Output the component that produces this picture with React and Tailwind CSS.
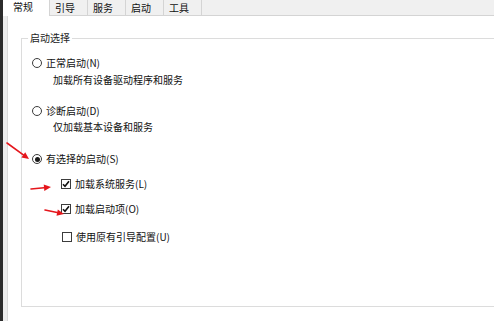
import React from "react";

const font = { fontFamily: '"Microsoft YaHei", "Noto Sans CJK SC", "Noto Sans", sans-serif' };

const tabs = [
  { label: "常规", active: true },
  { label: "引导" },
  { label: "服务" },
  { label: "启动" },
  { label: "工具" },
];

function Radio({ checked }) {
  return (
    <span className="w-[10px] h-[10px] rounded-full border border-[#3c3c3c] bg-white flex items-center justify-center shrink-0">
      {checked && <span className="w-[5px] h-[5px] rounded-full bg-[#1a1a1a]" />}
    </span>
  );
}

function Check({ checked }) {
  return (
    <span className="w-[10px] h-[10px] border border-[#3c3c3c] bg-white flex items-center justify-center shrink-0">
      {checked && (
        <svg width="8" height="8" viewBox="0 0 8 8">
          <path d="M1 4.2 L3 6.3 L7 1.2" fill="none" stroke="#111" strokeWidth="1.6" />
        </svg>
      )}
    </span>
  );
}

function Arrow({ x1, y1, x2, y2 }) {
  const a = Math.atan2(y2 - y1, x2 - x1);
  const L = 7, W = 3.2;
  const bx = x2 - L * Math.cos(a), by = y2 - L * Math.sin(a);
  const px = -Math.sin(a) * W, py = Math.cos(a) * W;
  return (
    <g>
      <line x1={x1} y1={y1} x2={bx} y2={by} stroke="#e5161c" strokeWidth="1.6" strokeLinecap="round" />
      <polygon points={`${x2},${y2} ${bx + px},${by + py} ${bx - px},${by - py}`} fill="#e5161c" />
    </g>
  );
}

export default function App() {
  return (
    <div className="relative w-[494px] h-[321px] overflow-hidden bg-white flex text-[10px] text-[#111]" style={font}>
      <div className="w-[3px] bg-[#2b2b2b] shrink-0" />
      <div className="flex-1 flex flex-col min-w-0">
        {/* Tabs */}
        <div className="h-[16px] flex shrink-0 bg-[#f0f0f0] border-b border-[#d4d4d4]">
          {tabs.map((t) => (
            <div
              key={t.label}
              className={
                t.active
                  ? "w-[47px] h-[16px] bg-white border-r border-[#d4d4d4] flex items-start pl-[10px] pt-[1px] leading-[12px]"
                  : "w-[38px] h-[15px] bg-[#f0f0f0] border-r border-[#d4d4d4] flex items-start pl-[5px] pt-[2px] leading-[12px]"
              }
            >
              {t.label}
            </div>
          ))}
        </div>

        {/* Page body */}
        <div className="flex-1 flex min-h-0">
          <div className="w-[4px] bg-[#ececec] shrink-0" />
          <div className="flex-1 border-l border-[#dadada] pl-[13px] pt-[16px] overflow-hidden">
            <fieldset className="w-[520px] h-[275px] border border-[#dcdcdc]">
              <legend className="ml-[6px] px-[2px] leading-[12px] text-[#222]">启动选择</legend>
              <div className="flex flex-col pt-[12px] leading-[14px]">
                <div className="flex items-center gap-[4px] pl-[10px] h-[14px]">
                  <Radio />
                  <span>正常启动(N)</span>
                </div>
                <div className="pl-[31px] mt-[3px] h-[14px]">加载所有设备驱动程序和服务</div>

                <div className="flex items-center gap-[4px] pl-[10px] h-[14px] mt-[17px]">
                  <Radio />
                  <span>诊断启动(D)</span>
                </div>
                <div className="pl-[31px] mt-[2px] h-[14px]">仅加载基本设备和服务</div>

                <div className="flex items-center gap-[4px] pl-[10px] h-[14px] mt-[18px]">
                  <Radio checked />
                  <span>有选择的启动(S)</span>
                </div>

                <div className="flex items-center gap-[4px] pl-[39px] h-[14px] mt-[11px]">
                  <Check checked />
                  <span>加载系统服务(L)</span>
                </div>
                <div className="flex items-center gap-[4px] pl-[39px] h-[14px] mt-[11px]">
                  <Check checked />
                  <span>加载启动项(O)</span>
                </div>
                <div className="flex items-center gap-[4px] pl-[40px] h-[14px] mt-[14px]">
                  <Check />
                  <span>使用原有引导配置(U)</span>
                </div>
              </div>
            </fieldset>
          </div>
        </div>
      </div>

      {/* red annotation arrows */}
      <svg className="absolute inset-0 pointer-events-none" width="494" height="321">
        <Arrow x1={7} y1={143} x2={29} y2={159} />
        <Arrow x1={31} y1={189} x2={51} y2={187} />
        <Arrow x1={45} y1={210} x2={64} y2={214} />
      </svg>
    </div>
  );
}
